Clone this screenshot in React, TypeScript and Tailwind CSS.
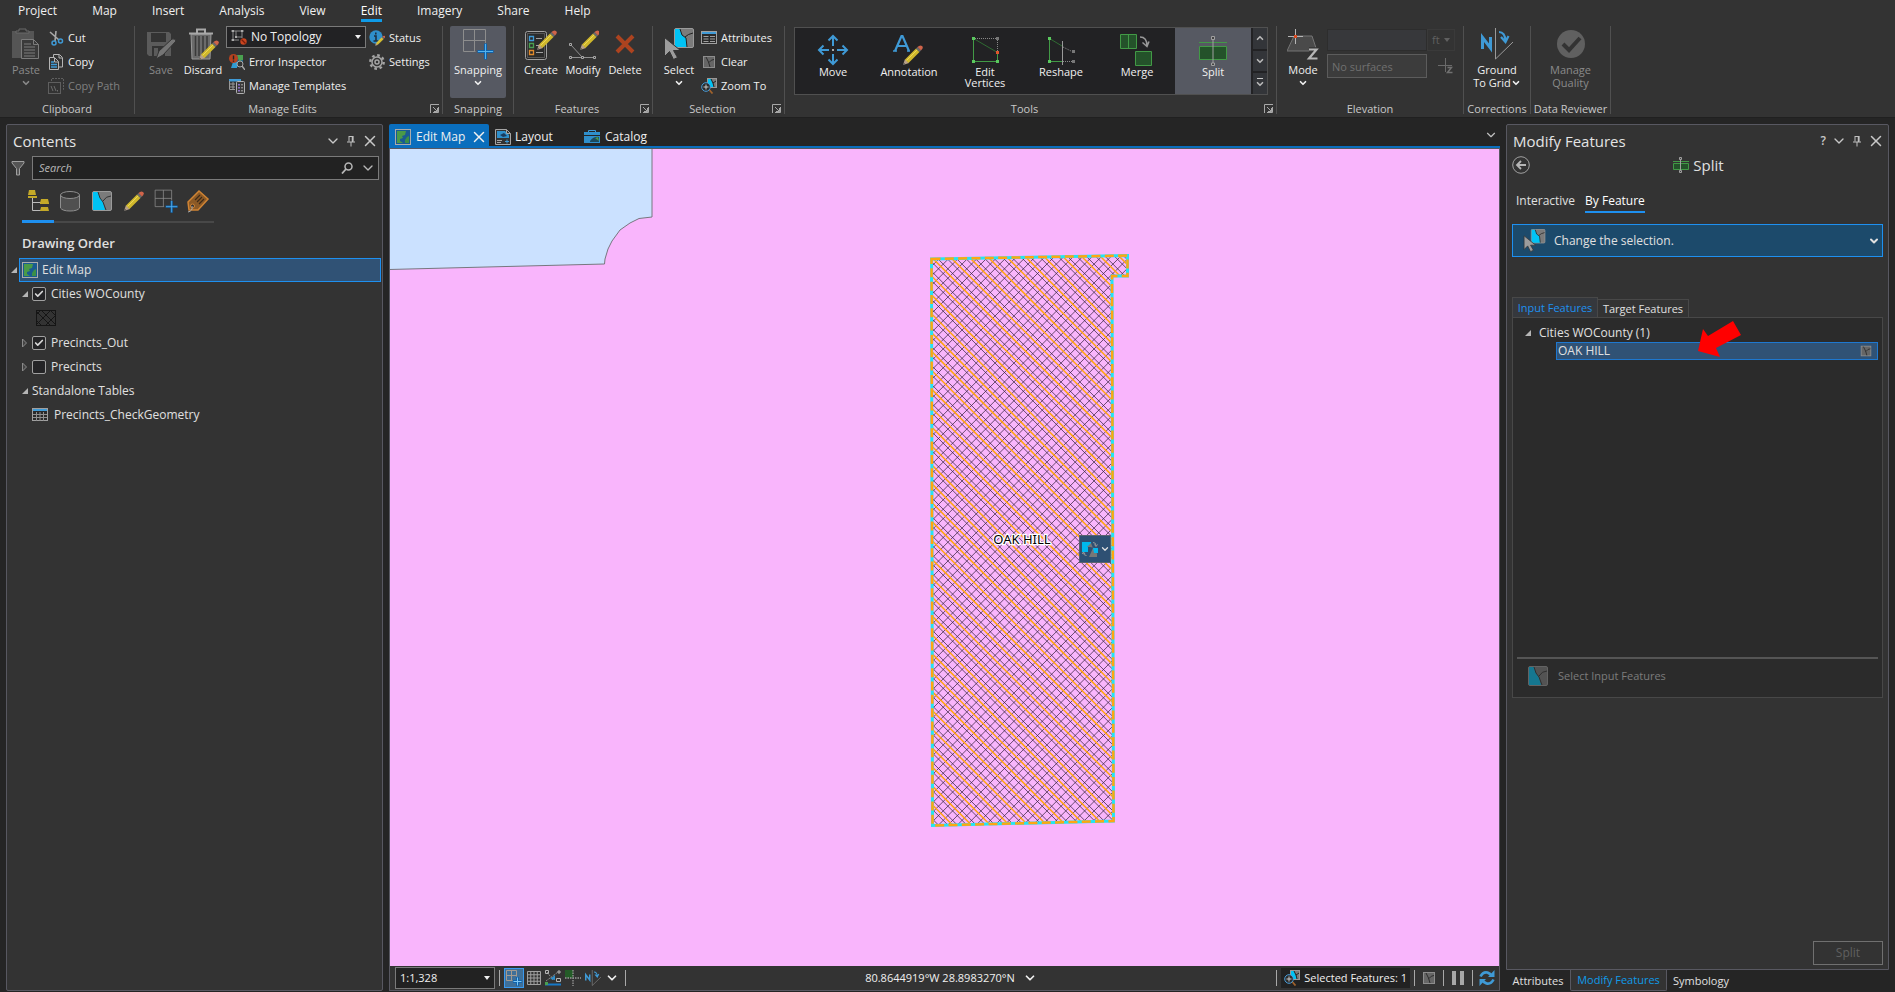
import { useState } from 'react';
import type { ReactNode } from 'react';
import { ChevronDown, ChevronUp, Check, X } from 'lucide-react';

interface IconProps {
  className?: string;
}

const MENU = ['Project', 'Map', 'Insert', 'Analysis', 'View', 'Edit', 'Imagery', 'Share', 'Help'];

/* ---------- Icons ---------- */

function Pencil({ x = 0, y = 0, s = 1 }: { x?: number; y?: number; s?: number }) {
  return (
    <g transform={`translate(${x} ${y}) scale(${s})`}>
      <path d="M0 20l2-6 4 4z" fill="#b8a088" />
      <path d="M0 20l.8-2.4 1.6 1.6z" fill="#555" />
      <path d="M2 14.500L13 3.500l3.500 3.500L5.500 18z" fill="#d0b82c" />
      <path d="M3.500 15.500L14.500 4.500" stroke="#ecd858" strokeWidth="1" />
      <path d="M13 3.500l1.500-1.500 3.500 3.500L16.500 7z" fill="#6c6c6c" />
      <path d="M14.500 2Q17-.5 19 1t-1 4.500z" fill="#d0644a" />
    </g>
  );
}

function LayerIcon({ className = 'size-5' }: IconProps) {
  return (
    <svg viewBox="0 0 20 20" className={className}>
      <rect x="0.500" y="0.500" width="19" height="19" rx="1.500" fill="#7b7b7b" stroke="#9b9b9b" />
      <path d="M1 1h5l2 6 3 4 2 8H1z" fill="#00c3f5" />
      <path d="M6 1l2 6 3 4 3 8M11 10q3-5 8-5" fill="none" stroke="#333" />
    </svg>
  );
}

function ClearIcon({ className = 'size-4' }: IconProps) {
  return (
    <svg viewBox="0 0 16 16" className={className}>
      <rect x="2.500" y="2.500" width="11" height="11" fill="#666" stroke="#8d8d8d" />
      <path d="M5 3l2.500 5 1.500 5M8 8.500q2-3 5-3" fill="none" stroke="#2c2c2c" />
    </svg>
  );
}

function PasteIcon() {
  return (
    <svg viewBox="0 0 32 32" className="size-8">
      <path d="M2 3h8V1h5v2h9v10h-9v17H2z" fill="#555" />
      <path d="M6 3v2h13V3h-3V1H9v2z" fill="#333" stroke="#6a6a6a" />
      <path d="M11.500 11.500h12l5 5v14h-17z" fill="#3a3a3a" stroke="#7c7c7c" />
      <path d="M23.500 11.500v5h5M14 16h7M14 19h11M14 22h11M14 25h11M14 28h11" fill="none" stroke="#7c7c7c" />
    </svg>
  );
}

function CutIcon() {
  return (
    <svg viewBox="0 0 16 16" className="size-4">
      <path d="M2 2l9 8M8 1L7 11" stroke="#a8a8a8" strokeWidth="1.600" />
      <circle cx="6" cy="13" r="2" fill="none" stroke="#3f9ad6" strokeWidth="1.500" />
      <circle cx="12.500" cy="11" r="2" fill="none" stroke="#3f9ad6" strokeWidth="1.500" />
    </svg>
  );
}

function CopyIcon() {
  return (
    <svg viewBox="0 0 16 16" className="size-4">
      <path d="M5.500 4V.5h6l3 3V13h-4" fill="none" stroke="#b5b5b5" />
      <path d="M1.500 3.500h5l4 4v8h-9z" fill="#333" stroke="#b5b5b5" />
      <path d="M11 1v3h3M6.500 4v4h4" fill="none" stroke="#b5b5b5" />
      <path d="M3 8h3M3 10.500h6M3 13h6" stroke="#3f9ad6" strokeWidth="1.300" />
    </svg>
  );
}

function CopyPathIcon() {
  return (
    <svg viewBox="0 0 16 16" className="size-4">
      <path d="M3.500 3V.5h12v11H14" fill="none" stroke="#5f5f5f" strokeDasharray="2 1" />
      <rect x="0.500" y="4.500" width="12" height="11" fill="#333" stroke="#5f5f5f" />
      <path d="M3 8l2 5M6 8l2 5M9.500 12v1.500" stroke="#6c6c6c" />
    </svg>
  );
}

function SaveIcon() {
  return (
    <svg viewBox="0 0 32 32" className="size-8">
      <path d="M2 4h22l2 2v22H4l-2-2z" fill="#5b5b5b" />
      <path d="M6 5h15v9H6zM7 18h13v10H7z" fill="#333" />
      <path d="M9 20h4v8H9z" fill="#5b5b5b" />
      <path d="M11 31l3-8 13-12q3-1 4 2L18 27z" fill="#757575" stroke="#333" />
    </svg>
  );
}

function DiscardIcon() {
  return (
    <svg viewBox="0 0 32 32" className="size-8">
      <path d="M4 6h20l-1 25H5z" fill="#6b6b6b" stroke="#999" />
      <path d="M2 5.500h24M10 5V1.500h8V5" fill="none" stroke="#a8a8a8" strokeWidth="2" />
      <path d="M8.500 8v20M12 8v20M16 8v20M20 8v18" stroke="#3a3a3a" strokeWidth="1.500" />
      <Pencil x={12} y={12} />
    </svg>
  );
}

function TopologyIcon() {
  return (
    <svg viewBox="0 0 16 16" className="size-4 shrink-0">
      <path d="M2 1v11M11 1v8M0 2h13M0 11h8M5 2v6h6" fill="none" stroke="#8a8a8a" />
      <path d="M1 1h2v2H1zM10 1h2v2h-2zM1 10h2v2H1zM4 7h2v2H4z" fill="#aaa" />
      <circle cx="12.500" cy="12.500" r="3.200" fill="#c9451f" />
      <path d="M10.500 10.500l4 4" stroke="#7b1f0c" strokeWidth="1.200" />
    </svg>
  );
}

function ErrorInspectorIcon() {
  return (
    <svg viewBox="0 0 16 16" className="size-4">
      <rect x="4" y="1" width="10" height="12" fill="#1d5f90" />
      <path d="M8 1h6v5l-4 1z" fill="#4aa050" />
      <path d="M4 8h4v6H2z" fill="#2f9bd2" />
      <circle cx="4.500" cy="4.500" r="4.500" fill="#b5421f" />
      <path d="M4.500 1.500v4M4.500 6.500v1.300" stroke="#222" strokeWidth="1.400" />
      <circle cx="11" cy="10" r="3" fill="#333" stroke="#a8a8a8" />
      <path d="M13 12l3 4" stroke="#a8a8a8" strokeWidth="1.400" />
    </svg>
  );
}

function TemplatesIcon() {
  return (
    <svg viewBox="0 0 16 16" className="size-4">
      <path d="M0 1h12v2.500H0z" fill="#3f9ad6" />
      <path d="M.5 3v8.500H6M1 6h5M1 9h5M4 4v7" fill="none" stroke="#999" />
      <rect x="7.500" y="3.500" width="8" height="12" rx="1" fill="#3a3a3a" stroke="#b0b0b0" />
      <path d="M9 6h2v1.500H9zM9 9h2v1.500H9zM9 12h2v1.500H9z" fill="#8b6fc8" />
      <path d="M12 6.800h2M12 9.800h2M12 12.800h2" stroke="#a8a8a8" />
    </svg>
  );
}

function StatusIcon() {
  return (
    <svg viewBox="0 0 16 16" className="size-4">
      <circle cx="7" cy="7" r="6.700" fill="#2f8fcb" />
      <path d="M6.800 2.500v2M5 6h2v4.500M4.500 11h5" fill="none" stroke="#1c3044" strokeWidth="1.600" />
      <Pencil x={6} y={5.500} s={0.520} />
    </svg>
  );
}

function GearIcon() {
  return (
    <svg viewBox="0 0 16 16" className="size-4">
      <circle cx="8" cy="8" r="6.700" fill="none" stroke="#a5a5a5" strokeWidth="2.400" strokeDasharray="2.600 2.660" />
      <circle cx="8" cy="8" r="5" fill="none" stroke="#a5a5a5" strokeWidth="1.500" />
      <circle cx="8" cy="8" r="2" fill="none" stroke="#a5a5a5" strokeWidth="1.500" />
    </svg>
  );
}

function SnapIcon({ className = 'size-8' }: IconProps) {
  return (
    <svg viewBox="0 0 32 32" className={className}>
      <path d="M1.500 1.500h22v14M13.500 23.500h-12v-22M12.500 1.500v22M1.500 12.500h22" fill="none" stroke="#8d8d8d" />
      <path d="M23.500 15.500v16M15.500 23.500h16" stroke="#0f63ad" strokeWidth="3" />
      <path d="M23.500 16v15M16 23.500h15" stroke="#55b3ee" />
    </svg>
  );
}

function SnapSmallIcon() {
  return (
    <svg viewBox="0 0 16 16" className="size-4">
      <path d="M.5.5h10v6M6.500 10.500h-6V.5M5.500.5v10M.5 5.500h10" fill="none" stroke="#a39a90" />
      <path d="M11.500 7v9M7 11.500h9" stroke="#0f63ad" strokeWidth="3" />
      <path d="M11.500 7.500v8M7.500 11.500h8" stroke="#7cc6f4" />
    </svg>
  );
}

function CreateIcon() {
  return (
    <svg viewBox="0 0 32 32" className="size-8">
      <rect x="0.500" y="3.500" width="21" height="28" rx="2" fill="#2b2b2b" stroke="#a0a0a0" />
      <rect x="2.500" y="5.500" width="17" height="24" fill="none" stroke="#565656" />
      <path d="M4.500 8.500h4v4h-4z" fill="none" stroke="#3f9ad6" strokeWidth="1.300" />
      <path d="M4.500 15.500h4v4h-4z" fill="none" stroke="#4aa050" strokeWidth="1.300" />
      <path d="M4.500 22.500h4v4h-4z" fill="none" stroke="#e08a2c" strokeWidth="1.300" />
      <path d="M11 10.500h6M11 17.500h4M11 24.500h7" stroke="#a0a0a0" />
      <Pencil x={12} y={2} />
    </svg>
  );
}

function ModifyIcon() {
  return (
    <svg viewBox="0 0 32 32" className="size-8">
      <path d="M4 17l11 12M4 29.500h22" stroke="#909090" fill="none" />
      <path d="M2.500 15.500h2v2h-2zM2.500 28.500h2v2h-2zM14.500 28.500h2v2h-2zM26.500 28.500h2v2h-2z" fill="#333" stroke="#a8a8a8" />
      <Pencil x={13} y={2} />
    </svg>
  );
}

function DeleteIcon() {
  return (
    <svg viewBox="0 0 32 32" className="size-8">
      <path d="M8 8l16 16M24 8L8 24" stroke="#ad431f" strokeWidth="4" />
    </svg>
  );
}

function SelectIcon({ className = 'size-8' }: IconProps) {
  return (
    <svg viewBox="0 0 32 32" className={className}>
      <rect x="11.500" y="0.500" width="19" height="19" rx="1.500" fill="#7b7b7b" stroke="#9b9b9b" />
      <path d="M12 1h5l2 6 4 3 1 9H12z" fill="#00c3f5" />
      <path d="M17 1l2 6 4 3 1 9M22 9q3-3 8-4" fill="none" stroke="#222" />
      <path d="M1.500 9.500v19l5-5 4 8 4-2-4-7h7z" fill="#9c9c9c" stroke="#333" />
    </svg>
  );
}

function AttributesIcon() {
  return (
    <svg viewBox="0 0 16 16" className="size-4">
      <rect x="0.500" y="1.500" width="15" height="12" fill="#2a2a2a" stroke="#a0a0a0" />
      <path d="M1 2h14v2H1z" fill="#3f9ad6" />
      <path d="M2.500 6.500h5M2.500 9h5M2.500 11.500h5M9 6.500h5M9 9h5M9 11.500h5" stroke="#a0a0a0" />
    </svg>
  );
}

function ZoomToIcon() {
  return (
    <svg viewBox="0 0 16 16" className="size-4">
      <rect x="6.500" y="0.500" width="9" height="9" fill="#7b7b7b" stroke="#999" />
      <path d="M7 1h3l3 8H7z" fill="#00c3f5" />
      <path d="M10 1l2 4 1 4M12 5l3-2" fill="none" stroke="#222" />
      <circle cx="5" cy="9" r="4.300" fill="#2b2b2b" stroke="#4a9fdc" />
      <path d="M5 6.500v5M2.500 9h5" stroke="#ccc" />
      <path d="M8.500 12l3 3.500" stroke="#a0622c" strokeWidth="1.800" />
    </svg>
  );
}

function MoveIcon() {
  return (
    <svg viewBox="0 0 32 32" className="size-8">
      <path
        d="M16 12V2M11.500 6.500L16 2l4.500 4.500M16 20v10M11.500 25.500L16 30l4.500-4.500M12 16H2M6.500 11.500L2 16l4.500 4.500M20 16h10M25.500 11.500L30 16l-4.500 4.500"
        fill="none"
        stroke="#3f9ad6"
        strokeWidth="2"
      />
      <path d="M15 15h2v2h-2z" fill="#aaa" />
    </svg>
  );
}

function AnnotationIcon() {
  return (
    <svg viewBox="0 0 32 32" className="size-8">
      <path d="M2 17L8.500 2h1L16 17M4.500 12h9" fill="none" stroke="#3f9ad6" strokeWidth="2.200" />
      <path d="M0 17h4M14 17h3" stroke="#3f9ad6" strokeWidth="1.500" />
      <Pencil x={10} y={11} />
    </svg>
  );
}

function EditVerticesIcon() {
  return (
    <svg viewBox="0 0 32 32" className="size-8">
      <path d="M4.500 4.500v23h24v-9" fill="none" stroke="#429a46" />
      <path d="M4.500 4.500l24 14" stroke="#2f6b32" />
      <path d="M6 4.500h22.500v13" fill="none" stroke="#888" strokeDasharray="1 1" />
      <path d="M3 3h3v3H3zM3 26h3v3H3zM27 26h3v3h-3z" fill="#5ac85e" />
      <path d="M27 3h3v3h-3z" fill="#777" />
      <path d="M27 17h3v3h-3z" fill="#e0562c" />
    </svg>
  );
}

function ReshapeIcon() {
  return (
    <svg viewBox="0 0 32 32" className="size-8">
      <path d="M17 27.500H4.500v-23" fill="none" stroke="#429a46" />
      <path d="M4.500 4.500L17 12" stroke="#2f6b32" />
      <path d="M18 13l10 5M18 27.500h9" fill="none" stroke="#888" strokeDasharray="1 1" />
      <path d="M17.500 7v24" stroke="#9a9a9a" />
      <path d="M3 3h3v3H3zM3 26h3v3H3z" fill="#5ac85e" />
      <path d="M27 16h3v3h-3zM27 26h3v3h-3z" fill="#777" />
    </svg>
  );
}

function MergeIcon() {
  return (
    <svg viewBox="0 0 34 32" className="h-8 w-[34px]">
      <path d="M.5.5h16v14H.5zM8.500.5v14M15.500 17.500h16v14h-16z" fill="#24522a" stroke="#429a46" />
      <path d="M20 3q7 0 7 9M22.500 8.500L27 12.500l2-5" fill="none" stroke="#999" strokeWidth="1.500" />
    </svg>
  );
}

function SplitIcon() {
  return (
    <svg viewBox="0 0 32 32" className="size-8">
      <path d="M2 8.500h28" stroke="#429a46" />
      <path d="M2.500 12.500h27v13h-27z" fill="#24522a" stroke="#429a46" />
      <path d="M16 4v26" stroke="#a0a0a0" />
      <path d="M14.500 2.500h3v3h-3zM14.500 29h3v2.500h-3z" fill="#444" stroke="#a0a0a0" />
    </svg>
  );
}

function SplitSmallIcon() {
  return (
    <svg viewBox="0 0 16 16" className="size-4">
      <path d="M0 4.500h16M.5 6.500h15v6H.5z" fill="#24522a" stroke="#429a46" />
      <path d="M7.500 2v12" stroke="#a0a0a0" />
      <path d="M6.500.5h2v2h-2zM6.500 13.500h2v2h-2z" fill="#444" stroke="#a0a0a0" />
    </svg>
  );
}

function ModeIcon() {
  return (
    <svg viewBox="0 0 32 32" className="size-8">
      <path d="M7 8h18l5 15H0z" fill="#4a4a4a" stroke="#757575" />
      <path d="M8.500 1v15M1 8.500h15" stroke="#b5b5b5" />
      <path d="M7 7h3v3H7z" fill="#d8481f" />
      <path d="M22 21.500h7.500L22 30.500h8.500" fill="none" stroke="#333" strokeWidth="4.500" />
      <path d="M22 21.500h7.500L22 30.500h8.500" fill="none" stroke="#b5b5b5" strokeWidth="2.200" />
    </svg>
  );
}

function NorthIcon({ className = 'size-8' }: IconProps) {
  return (
    <svg viewBox="0 0 32 32" className={className}>
      <path d="M1.500 21V9.500L9.500 20V9" fill="none" stroke="#3f9ad6" strokeWidth="3" />
      <path d="M14.500 0v31L32 14" fill="none" stroke="#9a9a9a" />
      <path d="M18 4q6 0 6.500 9M20 9l4.500 5 3-6" fill="none" stroke="#3f9ad6" strokeWidth="2.200" />
    </svg>
  );
}

function QualityIcon() {
  return (
    <svg viewBox="0 0 32 32" className="size-8">
      <circle cx="16" cy="16" r="14" fill="#606060" />
      <path d="M8 16l6 6L25 10" fill="none" stroke="#333" strokeWidth="4" />
    </svg>
  );
}

function MapIcon() {
  return (
    <svg viewBox="0 0 16 16" className="size-4 shrink-0">
      <rect x="0.500" y="0.500" width="15" height="15" fill="#1a5b92" stroke="#ababab" />
      <path d="M2 2h9l-1 4-3 1 1 2-3 1v2l3 2H2z" fill="#4a9a48" />
      <path d="M10 11l2-3 2-1v7h-4z" fill="#3b8f48" />
    </svg>
  );
}

function LayoutIcon() {
  return (
    <svg viewBox="0 0 16 16" className="size-4 shrink-0">
      <path d="M.5.5h11l4 4v11H.5z" fill="#333" stroke="#a5a5a5" />
      <path d="M2 2h8l4 4v3H2z" fill="#2f8fcb" />
      <path d="M5 6l4-2 3 3-4 1z" fill="#1a3b5e" />
      <path d="M11.500.5v4h4M2 11.500h5M2 13.500h4" fill="none" stroke="#a5a5a5" />
      <path d="M12 10.500v4M10 12.500h4" stroke="#3f9ad6" />
    </svg>
  );
}

function CatalogIcon() {
  return (
    <svg viewBox="0 0 16 16" className="size-4 shrink-0">
      <path d="M4.500 4V1.500h7V4" fill="none" stroke="#3f9ad6" />
      <path d="M0 3h16v3H0zM0 7h16v7H0z" fill="#2f8fcb" />
      <path d="M6 12q4-5 9-4v5H6z" fill="#1b4a5e" />
      <path d="M11 9l3-1 1 4z" fill="#4a9a48" />
    </svg>
  );
}

function DrawingOrderIcon() {
  return (
    <svg viewBox="0 0 24 24" className="size-6">
      <path d="M6.500 9v12.500H15M6.500 13.500H15" fill="none" stroke="#bbb" />
      <path d="M3 1h6l1 5H2zM2 7h9v2H2zM15 10h7l1 4h-9zM14 14h9v1h-9zM15 18h7l1 4h-9z" fill="#c4a928" />
    </svg>
  );
}

function DatabaseIcon() {
  return (
    <svg viewBox="0 0 24 24" className="size-6">
      <path d="M2.500 6v13q2 3 9.500 3t9.500-3V6" fill="#505050" stroke="#8f8f8f" />
      <ellipse cx="12" cy="6" rx="9.500" ry="3.500" fill="#333" stroke="#8f8f8f" />
    </svg>
  );
}

function TagIcon() {
  return (
    <svg viewBox="0 0 24 24" className="size-6">
      <path d="M2 13L13 2l9 8-10 11H3z" fill="#8c5a26" stroke="#d08434" strokeWidth="1.500" />
      <path d="M9 11l5-5M11 13l5-5M13 15l5-5" stroke="#3c2a18" strokeWidth="1.200" />
      <circle cx="6.500" cy="17" r="2" fill="#333" stroke="#d08434" />
      <path d="M6 17q1 5-4 6" fill="none" stroke="#aaa" />
    </svg>
  );
}

function PinIcon() {
  return (
    <svg viewBox="0 0 10 12" className="h-3 w-2.5">
      <path d="M3 1v5.500M7 1v5.500M3 1.500h4M1 7h8M5 7v4.500" fill="none" stroke="#c0c0c0" />
      <path d="M6.500 1v6" stroke="#c0c0c0" strokeWidth="1.500" />
    </svg>
  );
}

function Launcher() {
  return (
    <svg viewBox="0 0 9 9" className="size-[9px]">
      <path d="M.5 9V.5H9M8.500 3v5.500H3M3 3l4.500 4.500M7.500 4v3.500H4" fill="none" stroke="#a8a8a8" />
    </svg>
  );
}

function Triangle({ open }: { open: boolean }) {
  return (
    <svg viewBox="0 0 8 8" className="size-2 shrink-0">
      {open ? <path d="M7 1v6H1z" fill="#b5b5b5" /> : <path d="M1.500 0v8l4-4z" fill="#444" stroke="#8a8a8a" />}
    </svg>
  );
}

function Caret() {
  return (
    <svg viewBox="0 0 6 4" className="h-1 w-1.5 shrink-0">
      <path d="M0 0h6L3 4z" fill="currentColor" />
    </svg>
  );
}

/* ---------- Ribbon ---------- */

function Group({ label, width, launcher, children }: { label: string; width: string; launcher?: boolean; children: ReactNode }) {
  return (
    <section className={`flex h-[88px] shrink-0 flex-col border-r border-[#505050] ${width}`}>
      <div className="flex h-[77px] min-h-0">{children}</div>
      <div className="flex h-[11px] items-center">
        <h2 className="flex-1 whitespace-nowrap text-center leading-4 text-[#c8c8c8]">{label}</h2>
        {launcher && (
          <button aria-label={`${label} options`} className="w-3">
            <Launcher />
          </button>
        )}
      </div>
    </section>
  );
}

function BigButton({ icon, label, width, menu, disabled, active }: {
  icon: ReactNode;
  label: ReactNode;
  width: string;
  menu?: boolean;
  disabled?: boolean;
  active?: boolean;
}) {
  return (
    <button
      disabled={disabled}
      className={`flex h-[72px] shrink-0 flex-col items-center pt-0.5 ${width} ${disabled ? 'text-[#8a8a8a]' : 'text-[#f0f0f0]'} ${
        active ? 'rounded-xs bg-[#565962]' : ''
      }`}
    >
      {icon}
      <span className="mt-[3px] whitespace-nowrap leading-[13px]">{label}</span>
      {menu && <ChevronDown className="mt-0.5 size-2.5" strokeWidth={4} />}
    </button>
  );
}

function SmallButton({ icon, label, disabled }: { icon: ReactNode; label: string; disabled?: boolean }) {
  return (
    <button
      disabled={disabled}
      className={`flex h-6 items-center gap-1 whitespace-nowrap ${disabled ? 'text-[#808080]' : 'text-[#f0f0f0]'}`}
    >
      {icon}
      {label}
    </button>
  );
}

const TOOLS = [
  { label: 'Move', icon: <MoveIcon /> },
  { label: 'Annotation', icon: <AnnotationIcon /> },
  { label: 'Edit Vertices', icon: <EditVerticesIcon /> },
  { label: 'Reshape', icon: <ReshapeIcon /> },
  { label: 'Merge', icon: <MergeIcon /> },
  { label: 'Split', icon: <SplitIcon /> },
];

function Ribbon() {
  return (
    <header className="shrink-0 overflow-hidden border-b border-[#202020] bg-[#333333] text-[11px]">
      <nav className="flex h-[26px] gap-[35px] pl-[18px] text-[12px] text-[#f0f0f0]">
        {MENU.map(item => (
          <button
            key={item}
            className={`h-[22px] border-b-3 leading-[22px] ${item === 'Edit' ? 'border-[#0f9be8] text-white' : 'border-transparent'}`}
          >
            {item}
          </button>
        ))}
      </nav>

      <div className="flex pb-[3px]">
        <Group label="Clipboard" width="w-[135px]">
          <BigButton icon={<PasteIcon />} label="Paste" width="ml-2 w-9" menu disabled />
          <div className="ml-1 flex flex-col">
            <SmallButton icon={<CutIcon />} label="Cut" />
            <SmallButton icon={<CopyIcon />} label="Copy" />
            <SmallButton icon={<CopyPathIcon />} label="Copy Path" disabled />
          </div>
        </Group>

        <Group label="Manage Edits" width="w-[308px]" launcher>
          <BigButton icon={<SaveIcon />} label="Save" width="ml-1 w-11" disabled />
          <BigButton icon={<DiscardIcon />} label="Discard" width="w-10" />
          <div className="ml-[3px] flex w-[140px] flex-col">
            <label className="flex h-[22px] items-center gap-1 border border-[#7a7a7a] bg-[#222224] px-1 text-[12px] text-[#f0f0f0]">
              <TopologyIcon />
              <select aria-label="Topology" className="min-w-0 flex-1 appearance-none bg-transparent outline-none">
                <option>No Topology</option>
              </select>
              <Caret />
            </label>
            <div className="mt-0.5 ml-[3px] flex flex-col">
              <SmallButton icon={<ErrorInspectorIcon />} label="Error Inspector" />
              <SmallButton icon={<TemplatesIcon />} label="Manage Templates" />
            </div>
          </div>
          <div className="ml-[3px] flex flex-col">
            <SmallButton icon={<StatusIcon />} label="Status" />
            <SmallButton icon={<GearIcon />} label="Settings" />
          </div>
        </Group>

        <Group label="Snapping" width="w-[71px]">
          <BigButton icon={<SnapIcon />} label="Snapping" width="ml-[7px] w-14" menu active />
        </Group>

        <Group label="Features" width="w-[139px]" launcher>
          <BigButton icon={<CreateIcon />} label="Create" width="ml-[7px] w-10" />
          <BigButton icon={<ModifyIcon />} label="Modify" width="w-11" />
          <BigButton icon={<DeleteIcon />} label="Delete" width="w-10" />
        </Group>

        <Group label="Selection" width="w-[132px]" launcher>
          <BigButton icon={<SelectIcon />} label="Select" width="ml-1.5 w-10" menu />
          <div className="ml-0.5 flex flex-col">
            <SmallButton icon={<AttributesIcon />} label="Attributes" />
            <SmallButton icon={<ClearIcon />} label="Clear" />
            <SmallButton icon={<ZoomToIcon />} label="Zoom To" />
          </div>
        </Group>

        <Group label="Tools" width="w-[492px]" launcher>
          <div className="mt-px ml-[9px] flex h-[68px] border border-[#505050] bg-[#222224]">
            {TOOLS.map(tool => (
              <button
                key={tool.label}
                className={`flex w-[76px] flex-col items-center pt-1.5 leading-[11px] text-[#f0f0f0] ${tool.label === 'Split' ? 'bg-[#565962]' : ''}`}
              >
                {tool.icon}
                <span className={tool.label === 'Edit Vertices' ? 'w-12' : ''}>{tool.label}</span>
              </button>
            ))}
            <div className="ml-0.5 flex w-3.5 flex-col gap-0.5 text-[#b8b8b8]">
              <button aria-label="Previous tools" className="flex flex-1 items-center justify-center bg-[#333539]">
                <ChevronUp className="size-2.5" strokeWidth={4} />
              </button>
              <button aria-label="Next tools" className="flex flex-1 items-center justify-center bg-[#333539]">
                <ChevronDown className="size-2.5" strokeWidth={4} />
              </button>
              <button aria-label="All tools" className="flex flex-1 flex-col items-center justify-center bg-[#333539]">
                <span className="h-px w-1.5 bg-[#c8c8c8]" />
                <ChevronDown className="size-2.5" strokeWidth={4} />
              </button>
            </div>
          </div>
        </Group>

        <Group label="Elevation" width="w-[187px]">
          <BigButton icon={<ModeIcon />} label="Mode" width="ml-1.5 w-10" menu />
          <div className="ml-1 flex flex-col gap-[3px] pt-[3px] text-[#606060]">
            <div className="flex">
              <input aria-label="Elevation value" disabled className="h-[22px] w-[100px] border border-[#2d2d2d] bg-[#37383b]" />
              <button disabled className="flex h-[22px] w-7 items-center justify-between border border-[#3a3a3a] px-1">
                ft <Caret />
              </button>
            </div>
            <div className="flex items-center">
              <input
                aria-label="Surface"
                disabled
                placeholder="No surfaces"
                className="h-6 w-[100px] border border-[#5c5c5c] bg-[#3c3c3c] px-1 placeholder:text-[#707070]"
              />
              <svg viewBox="0 0 16 16" className="ml-2.5 size-4">
                <path d="M8.500 0v14M1 7.500h14" stroke="#6a6a6a" />
                <path d="M10.500 9.500h4l-4 5h5" fill="none" stroke="#707070" strokeWidth="1.500" />
              </svg>
            </div>
          </div>
        </Group>

        <Group label="Corrections" width="w-[67px]">
          <BigButton
            icon={<NorthIcon />}
            label={
              <>
                Ground
                <span className="flex items-center">
                  To Grid
                  <ChevronDown className="size-2.5" strokeWidth={4} />
                </span>
              </>
            }
            width="w-full"
          />
        </Group>

        <Group label="Data Reviewer" width="w-20">
          <BigButton icon={<QualityIcon />} label={<>Manage<br />Quality</>} width="w-full" disabled />
        </Group>
      </div>
    </header>
  );
}

/* ---------- Contents pane ---------- */

function PaneTitle({ title, help }: { title: string; help?: boolean }) {
  return (
    <div className="flex h-[31px] items-center gap-[5px] pr-[3px] pl-1.5 text-[#c8c8c8]">
      <h2 className="flex-1 text-[15px] text-[#e4e4e4]">{title}</h2>
      {help && <button aria-label="Help" className="font-semibold">?</button>}
      <button aria-label={`${title} menu`}><ChevronDown className="size-4" strokeWidth={2} /></button>
      <button aria-label={`Pin ${title}`}><PinIcon /></button>
      <button aria-label={`Close ${title}`}><X className="size-[18px]" strokeWidth={2} /></button>
    </div>
  );
}

function LayerRow({ name, open, initial }: { name: string; open: boolean; initial: boolean }) {
  const [visible, setVisible] = useState(initial);
  return (
    <div className="flex h-6 items-center pl-3.5">
      <button aria-label={`Expand ${name}`}><Triangle open={open} /></button>
      <label className="ml-[3px] flex items-center gap-[5px]">
        <span className="relative flex size-3.5">
          <input
            type="checkbox"
            checked={visible}
            onChange={e => setVisible(e.target.checked)}
            className="size-3.5 appearance-none rounded-xs border border-[#a0a0a0] bg-[#242426]"
          />
          {visible && <Check className="pointer-events-none absolute inset-0.5 size-2.5 text-[#d8d8d8]" strokeWidth={4} />}
        </span>
        {name}
      </label>
    </div>
  );
}

const CONTENT_TABS = [
  { label: 'List by drawing order', icon: <DrawingOrderIcon /> },
  { label: 'List by data source', icon: <DatabaseIcon /> },
  { label: 'List by selection', icon: <LayerIcon /> },
  { label: 'List by editing', icon: <svg viewBox="0 0 20 20" className="size-5"><Pencil /></svg> },
  { label: 'List by snapping', icon: <SnapIcon className="size-6" /> },
  { label: 'List by labeling', icon: <TagIcon /> },
];

function ContentsPane() {
  return (
    <aside className="flex w-[377px] shrink-0 flex-col rounded-xs border border-[#585861] bg-[#333333] text-[#e0e0e0]">
      <PaneTitle title="Contents" />
      <div className="flex items-center pr-[3px] pl-1">
        <svg viewBox="0 0 14 16" className="mr-[7px] h-4 w-3.5">
          <path d="M1 1.500h12v1.500L8.500 8.500V15h-3V8.500L1 3z" fill="#555" stroke="#a0a0a0" />
        </svg>
        <div className="flex h-6 flex-1 items-center border border-[#7a7a7a] bg-[#222222] pr-0.5 pl-1.5">
          <input aria-label="Search" placeholder="Search" className="min-w-0 flex-1 bg-transparent text-[11px] italic outline-none placeholder:text-[#b8b8b8]" />
          <svg viewBox="0 0 12 12" className="mr-[7px] size-3">
            <circle cx="7.500" cy="4.500" r="3.500" fill="none" stroke="#b8b8b8" strokeWidth="1.500" />
            <path d="M5 7l-4 4.500" stroke="#b8b8b8" strokeWidth="1.800" />
          </svg>
          <ChevronDown className="size-4 text-[#b8b8b8]" strokeWidth={2} />
        </div>
      </div>

      <div className="mt-2 ml-[15px] flex">
        {CONTENT_TABS.map((tab, i) => (
          <button
            key={tab.label}
            aria-label={tab.label}
            className={`flex h-[35px] w-8 items-start justify-center pt-px ${i === 0 ? 'border-b-3 border-[#1e90f0]' : 'border-b-2 border-[#484848]'}`}
          >
            <span className="flex size-6 items-center justify-center">{tab.icon}</span>
          </button>
        ))}
      </div>

      <h3 className="mt-[7px] ml-[15px] h-7 text-[13px] leading-[26px] font-semibold">Drawing Order</h3>

      <div className="flex h-6 items-center pr-px pl-[3px]">
        <Triangle open />
        <button className="ml-px flex h-6 flex-1 items-center gap-1 border border-[#1e90f0] bg-[#305275] px-0.5">
          <MapIcon />
          Edit Map
        </button>
      </div>
      <LayerRow name="Cities WOCounty" open initial />
      <div className="flex h-[25px] items-start pt-1 pl-[29px]">
        <svg viewBox="0 0 20 16" className="h-4 w-5">
          <rect x="0.500" y="0.500" width="19" height="15" fill="none" stroke="#151515" />
          <path d="M0 5l5-5M0 15L15 0M9 16L20 5M0 1l15 15M5 0l15 15M14 0l6 6M0 10l6 6" stroke="#151515" />
        </svg>
      </div>
      <LayerRow name="Precincts_Out" open={false} initial />
      <LayerRow name="Precincts" open={false} initial={false} />
      <div className="flex h-6 items-center gap-[3px] pl-3.5">
        <Triangle open />
        Standalone Tables
      </div>
      <div className="flex h-6 items-center gap-1.5 pl-[25px]">
        <svg viewBox="0 0 16 16" className="size-4">
          <rect x="0.500" y="1.500" width="15" height="12" fill="#2a2a2a" stroke="#a0a0a0" />
          <path d="M1 2h14v2H1z" fill="#3f9ad6" />
          <path d="M1 7.500h14M1 10.500h14M4.500 5v9M8 5v9M11.500 5v9" stroke="#909090" />
        </svg>
        Precincts_CheckGeometry
      </div>
    </aside>
  );
}

/* ---------- Map view ---------- */

const PARCEL = 'M541.500 110L737.500 106.500V127H722L723.500 672L542.500 676.500Z';

// Diagonal hatch lines covering the parcel's bounding box
function hatch(start: number, step: number, rising: boolean) {
  const top = 100;
  const bottom = 690;
  const parts: string[] = [];
  for (let c = start; rising ? c < 1440 : c < 650; c += step) {
    parts.push(rising ? `M${c - top} ${top}L${c - bottom} ${bottom}` : `M${c + top} ${top}L${c + bottom} ${bottom}`);
  }
  return parts.join('');
}

const CROSS_STEP = 9.428;
const SELECTED_STEP = 18.856;

function MapCanvas() {
  return (
    <div className="relative min-h-0 flex-1 overflow-hidden bg-[#f9b5fc]">
      <svg className="block size-full">
        <defs>
          <clipPath id="parcel">
            <path d={PARCEL} />
          </clipPath>
        </defs>
        <path d="M-1 120.500L214.500 115L215 110L218 100L222 92L230 81L240 74L249 69.500L262 68V-1H-1Z" fill="#cbe1ff" stroke="#77777f" />
        <g clipPath="url(#parcel)" fill="none">
          <path d={hatch(-146.440, CROSS_STEP, false)} stroke="#3a2440" strokeWidth="0.750" />
          <path d={hatch(640, CROSS_STEP, true)} stroke="#3a2440" strokeWidth="0.750" />
          <path d={hatch(-151.190, SELECTED_STEP, false)} stroke="#ffa510" strokeWidth="1.500" />
        </g>
        <path d={PARCEL} fill="none" stroke="#24e4f2" strokeWidth="3" />
        <path d={PARCEL} fill="none" stroke="#ffa510" strokeWidth="2.500" strokeDasharray="9 4.330" />
        <text
          x="632"
          y="395"
          textAnchor="middle"
          fill="#000"
          stroke="#fff"
          strokeWidth="2.500"
          paintOrder="stroke"
          className="font-['Noto_Sans',sans-serif] text-[13px]"
        >
          OAK HILL
        </text>
      </svg>
      <button aria-label="Selection options" className="absolute top-[386px] left-[689px] flex h-7 w-8 items-center gap-0.5 border border-[#5a6470] bg-[#2e5073] px-0.5">
        <svg viewBox="0 0 16 16" className="size-4 shrink-0">
          <path d="M0 1h9v5H6v5H0z" fill="#00b9ee" />
          <path d="M5 6l4-4 2 5-4 9h8v-3l-2-6-5-1z" fill="#777" />
          <path d="M11 7h5v5h-4z" fill="#00b9ee" />
          <path d="M11 1.500q3 0 3 3M12.500 3.500l1.500 2 1.500-2M1.500 11.500q0 3 3 3M0 13l1.500-2L3 13" fill="none" stroke="#999" />
        </svg>
        <ChevronDown className="size-2.5 shrink-0 text-[#e0e0e0]" strokeWidth={3} />
      </button>
    </div>
  );
}

function Separator() {
  return <span className="h-4 w-px bg-[#a8a8a8]" />;
}

function StatusBar() {
  return (
    <footer className="flex h-6 shrink-0 items-center bg-[#333333] pr-1 pl-[5px] text-[11px] text-[#f0f0f0]">
      <div className="flex flex-1 items-center">
        <label className="flex h-[22px] w-[100px] items-center border border-[#7a7a7a] bg-[#222222] px-1">
          <select aria-label="Map scale" className="min-w-0 flex-1 appearance-none bg-transparent outline-none">
            <option>1:1,328</option>
          </select>
          <Caret />
        </label>
        <span className="ml-1 flex"><Separator /></span>
        <button aria-label="Snapping" className="ml-1 flex size-5 items-center justify-center border border-[#3a9af0] bg-[#3f6f98]">
          <SnapSmallIcon />
        </button>
        <button aria-label="Grid" className="ml-[3px]">
          <svg viewBox="0 0 14 14" className="size-3.5">
            <path d="M.5.5h13v13H.5zM3.750 0v14M7 0v14M10.250 0v14M0 3.750h14M0 7h14M0 10.250h14" fill="none" stroke="#a0a0a0" />
          </svg>
        </button>
        <button aria-label="Dynamic constraints" className="ml-1">
          <svg viewBox="0 0 16 16" className="size-4">
            <path d="M0 14.500h16" stroke="#1679c8" strokeWidth="2" />
            <path d="M1 11L13 2M2 2l6 8" stroke="#8a8a8a" strokeDasharray="2 1" />
            <path d="M.5.5h3v3h-3zM11.500 8.500h4v3h-4zM12 2h4M14 0v4" fill="none" stroke="#b5b5b5" />
            <path d="M5 9l5-4v5z" fill="#2f8fcb" />
            <path d="M0 12h3v3H0z" fill="#4aa050" />
          </svg>
        </button>
        <button aria-label="Inference" className="ml-1">
          <svg viewBox="0 0 16 16" className="size-4">
            <path d="M0 0h8v8H0z" fill="#245c28" />
            <path d="M8 0v16M0 8h16" stroke="#999" strokeWidth="1.300" strokeDasharray="1.500 1" />
          </svg>
        </button>
        <button aria-label="Ground to grid" className="ml-1"><NorthIcon className="size-4" /></button>
        <button aria-label="More" className="ml-1"><ChevronDown className="size-3.5" strokeWidth={3} /></button>
        <span className="ml-1.5 flex"><Separator /></span>
      </div>
      <button className="ml-3 flex items-center gap-2">
        80.8644919°W 28.8983270°N
        <ChevronDown className="size-3.5" strokeWidth={3} />
      </button>
      <div className="flex flex-1 items-center justify-end">
        <Separator />
        <button className="ml-1 flex h-5 items-center gap-1 bg-[#222222] px-[3px] whitespace-nowrap">
          <ZoomToIcon />
          Selected Features: 1
        </button>
        <span className="ml-1 flex"><Separator /></span>
        <button aria-label="Clear selection" className="ml-1.5"><ClearIcon /></button>
        <span className="ml-1.5 flex"><Separator /></span>
        <button aria-label="Pause drawing" className="ml-2 flex gap-1">
          <span className="h-3.5 w-1 bg-[#a8a8a8]" />
          <span className="h-3.5 w-1 bg-[#a8a8a8]" />
        </button>
        <span className="ml-2 flex"><Separator /></span>
        <button aria-label="Refresh" className="ml-1.5">
          <svg viewBox="0 0 16 16" className="size-4">
            <path d="M1.500 6.500Q4 1.500 8.500 2.500L12 4.500M14.500 9.500Q12 14.500 7.500 13.500L4 11.500" fill="none" stroke="#3f9ad6" strokeWidth="2.600" />
            <path d="M15.500 0v7H9zM.5 16V9H7z" fill="#3f9ad6" />
          </svg>
        </button>
      </div>
    </footer>
  );
}

function MapView() {
  return (
    <main className="flex min-w-0 flex-1 flex-col">
      <div className="flex h-6 shrink-0 items-end border-b-2 border-[#0a6ebd] text-[#f0f0f0]">
        <div className="flex h-[22px] w-[100px] items-center gap-[5px] rounded-t-xs bg-[#0a6ebd] pt-1 pl-1.5">
          <MapIcon />
          <button className="flex-1 whitespace-nowrap text-left">Edit Map</button>
          <button aria-label="Close Edit Map" className="mr-[3px]"><X className="size-[18px]" strokeWidth={2} /></button>
        </div>
        <button className="flex h-[22px] w-[89px] items-center gap-1 pt-1 pl-1.5">
          <LayoutIcon />
          Layout
        </button>
        <button className="flex h-[22px] items-center gap-[5px] pt-1 pl-1.5">
          <CatalogIcon />
          Catalog
        </button>
        <button aria-label="View list" className="mr-0.5 mb-1 ml-auto text-[#c0c0c0]"><ChevronDown className="size-3.5" strokeWidth={2} /></button>
      </div>
      <div className="flex min-h-0 flex-1 flex-col border border-[#585861]">
        <MapCanvas />
        <StatusBar />
      </div>
    </main>
  );
}

/* ---------- Modify Features pane ---------- */

function ModifyPane() {
  return (
    <aside className="flex w-[383px] shrink-0 flex-col text-[#e0e0e0]">
      <div className="relative flex min-h-0 flex-1 flex-col rounded-t-xs border border-[#585861] bg-[#333333] px-[5px]">
        <div className="-mx-[5px]"><PaneTitle title="Modify Features" help /></div>
        <div className="flex h-[18px] items-center">
          <button aria-label="Back">
            <svg viewBox="0 0 18 18" className="size-[18px]">
              <circle cx="9" cy="9" r="8.300" fill="none" stroke="#a0a0a0" />
              <path d="M14 9H5M9 5L5 9l4 4" fill="none" stroke="#b5b5b5" strokeWidth="1.800" />
            </svg>
          </button>
          <h3 className="flex flex-1 items-center justify-center gap-1 pr-4 text-[15px]">
            <SplitSmallIcon />
            Split
          </h3>
        </div>
        <div className="mt-[17px] ml-1 flex gap-2.5 text-[12px]">
          <button className="h-[22px] border-b-2 border-transparent">Interactive</button>
          <button className="h-[22px] border-b-2 border-[#1e90f0] font-medium text-white">By Feature</button>
        </div>

        <button className="mt-[11px] flex h-[33px] shrink-0 items-center gap-2 border border-[#1e90f0] bg-[#1c4a6b] pr-0.5 pl-2.5">
          <SelectIcon className="size-[23px]" />
          <span className="flex-1 text-left">Change the selection.</span>
          <ChevronDown className="size-3" strokeWidth={4} />
        </button>

        <div className="mt-10 flex items-end text-[11px]">
          <button className="h-5 w-[86px] border border-b-0 border-[#484848] bg-[#35383d] text-[#1e90f0]">Input Features</button>
          <button className="h-[18px] w-[91px] border border-b-0 border-l-0 border-[#484848]">Target Features</button>
        </div>
        <div className="flex h-[381px] shrink-0 flex-col border border-[#484848] bg-[#2b2b2b] px-1">
          <div className="mt-[5px] ml-[7px] flex h-[19px] items-center gap-[7px]">
            <Triangle open />
            Cities WOCounty (1)
          </div>
          <button className="ml-[39px] flex h-[18px] items-center justify-between border border-[#1e78d0] bg-[#305275] pr-1 pl-px">
            OAK HILL
            <ClearIcon className="size-3.5" />
          </button>
          <hr className="mt-auto border-t-2 border-[#555555]" />
          <button disabled className="flex h-[38px] items-center gap-2.5 pb-1 pl-[11px] text-[11px] text-[#7c7c7c]">
            <span className="opacity-50"><LayerIcon /></span>
            Select Input Features
          </button>
        </div>

        <div className="mt-auto mb-1 flex justify-end">
          <button disabled className="h-6 w-[70px] border border-[#707070] text-[#606060]">Split</button>
        </div>

        {/* Callout arrow over the feature list */}
        <svg viewBox="0 0 44 38" className="pointer-events-none absolute top-[195px] left-[190px] h-[38px] w-11">
          <path d="M1 31L6 9l5 7L36 1l8 14L19 28l4 9z" fill="#ff0000" />
        </svg>
      </div>
      <div className="flex h-[21px] shrink-0 text-[11px] whitespace-nowrap">
        <button className="w-16">Attributes</button>
        <button className="-mt-px w-[97px] rounded-b-xs border border-t-0 border-[#585861] bg-[#333333] text-[#0f9be8]">Modify Features</button>
        <button className="ml-1.5">Symbology</button>
      </div>
    </aside>
  );
}

export default function App() {
  return (
    <div className="flex h-screen flex-col overflow-hidden bg-[#252525] font-['Open_Sans','Noto_Sans',sans-serif] text-[12px] leading-4">
      <Ribbon />
      <div className="flex min-h-0 flex-1 gap-1.5 px-1.5 pt-1.5 pb-px">
        <ContentsPane />
        <MapView />
        <ModifyPane />
      </div>
    </div>
  );
}
